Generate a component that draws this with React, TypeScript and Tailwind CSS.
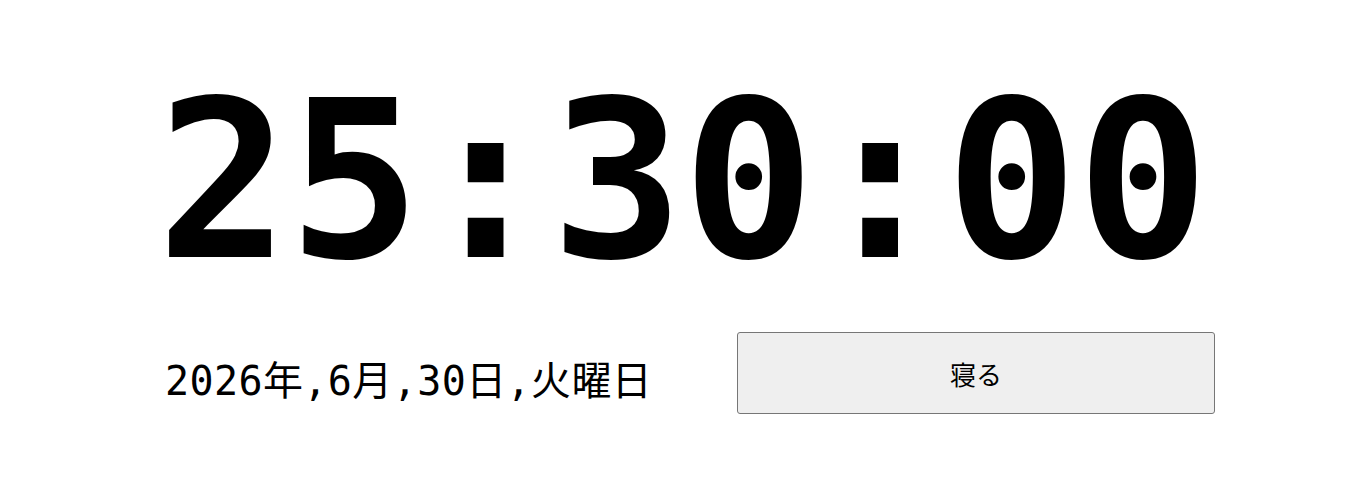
export default function App() {
  return (
    <div className="flex min-h-[492px] w-full flex-col items-center bg-white text-black">
      <div className="mt-[71px] font-['DejaVu_Sans_Mono',monospace] text-[220px] font-bold leading-none tracking-[-1px]">
        25:30:00
      </div>
      <div className="ml-[10px] mt-[41px] flex w-[1055px] items-center justify-between">
        <div className="pl-[5px] pt-[16px] font-['DejaVu_Sans_Mono','Noto_Sans_CJK_JP',monospace] text-[40px] leading-none tracking-[0.4px]">
          2026年,6月,30日,火曜日
        </div>
        <button
          type="button"
          className="h-[82px] w-[478px] rounded-[3px] border border-[#767676] bg-[#efefef] font-['Noto_Sans_CJK_JP',sans-serif] text-[26px] text-black"
        >
          寝る
        </button>
      </div>
    </div>
  );
}
